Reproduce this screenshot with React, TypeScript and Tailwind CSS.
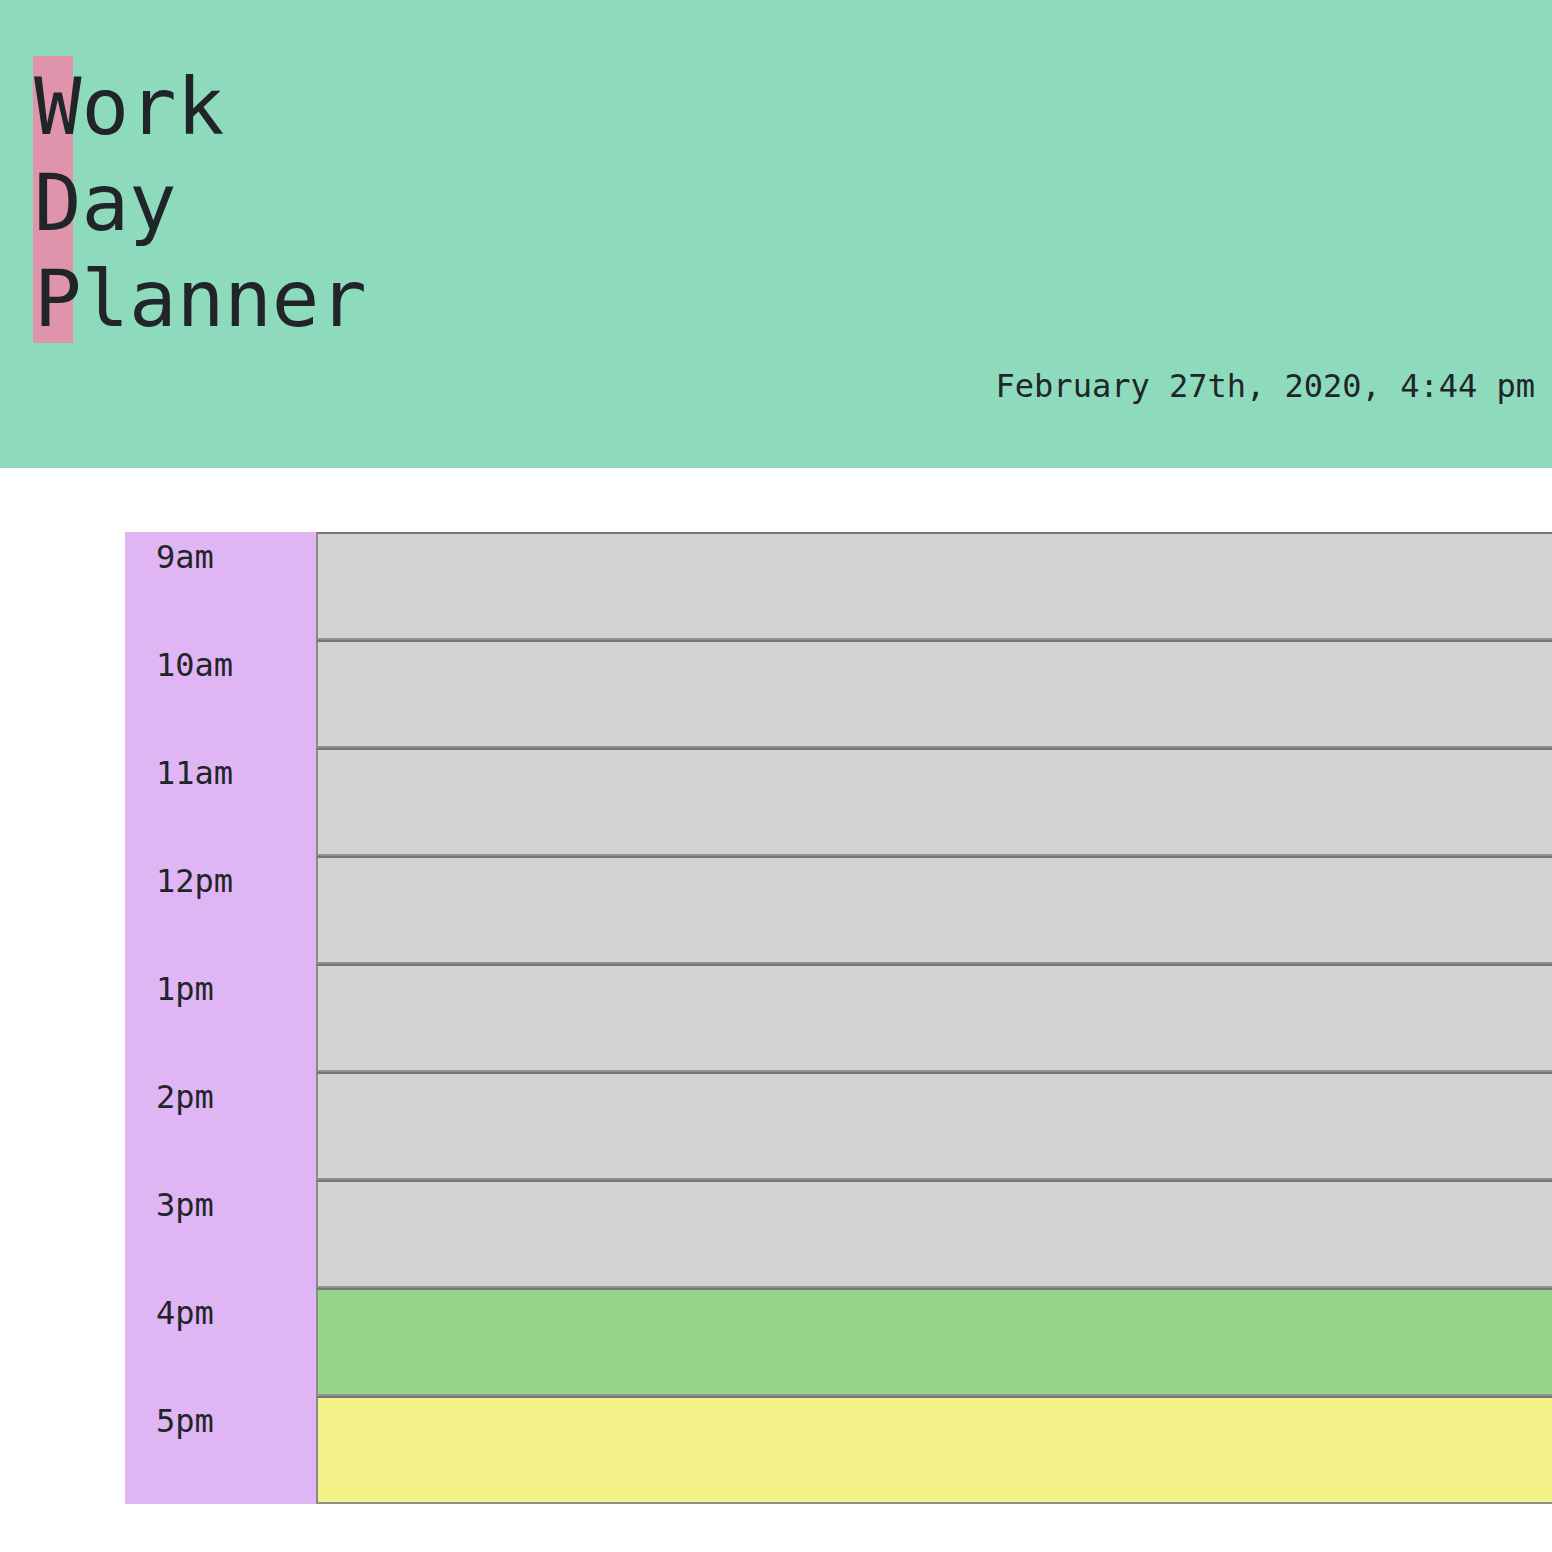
import React from "react";

const hours = [
  { label: "9am", state: "past" },
  { label: "10am", state: "past" },
  { label: "11am", state: "past" },
  { label: "12pm", state: "past" },
  { label: "1pm", state: "past" },
  { label: "2pm", state: "past" },
  { label: "3pm", state: "past" },
  { label: "4pm", state: "present" },
  { label: "5pm", state: "future" },
];

const stateBg: Record<string, string> = {
  past: "bg-[#d3d3d3]",
  present: "bg-[#96d68a]",
  future: "bg-[#f3f389]",
};

export default function App() {
  return (
    <div
      className="w-[1552px] h-[1552px] overflow-hidden bg-white text-[#212529]"
      style={{ fontFamily: '"DejaVu Sans Mono", "Liberation Mono", monospace' }}
    >
      {/* Header */}
      <header className="bg-[#8ddbbc] pt-[56px] pb-[58px]">
        <div className="relative ml-[33px] w-fit">
          <div className="absolute left-0 top-0 w-[40px] h-[287px] bg-[#e094ac]" />
          <h1 className="relative pt-[3px] pl-[1px] text-[79px] leading-[96px] font-normal">
            <div>Work</div>
            <div>Day</div>
            <div>Planner</div>
          </h1>
        </div>
        <p className="mt-[15px] pr-[17px] text-right text-[32px] leading-[48px]">
          February 27th, 2020, 4:44 pm
        </p>
      </header>

      {/* Hours */}
      <main className="pt-[64px] pl-[125px]">
        {hours.map((h) => (
          <div key={h.label} className="flex h-[108px]">
            <div className="w-[191px] shrink-0 bg-[#dfb5f4] pl-[31px] pt-[1px] text-[32px] leading-[48px]">
              {h.label}
            </div>
            <textarea
              className={`w-[1400px] shrink-0 h-[108px] resize-none border-2 border-t-[#767676] border-l-[#8a8a8a] border-b-[#8f8f8f] border-r-[#8f8f8f] ${stateBg[h.state]}`}
            />
          </div>
        ))}
      </main>
    </div>
  );
}
